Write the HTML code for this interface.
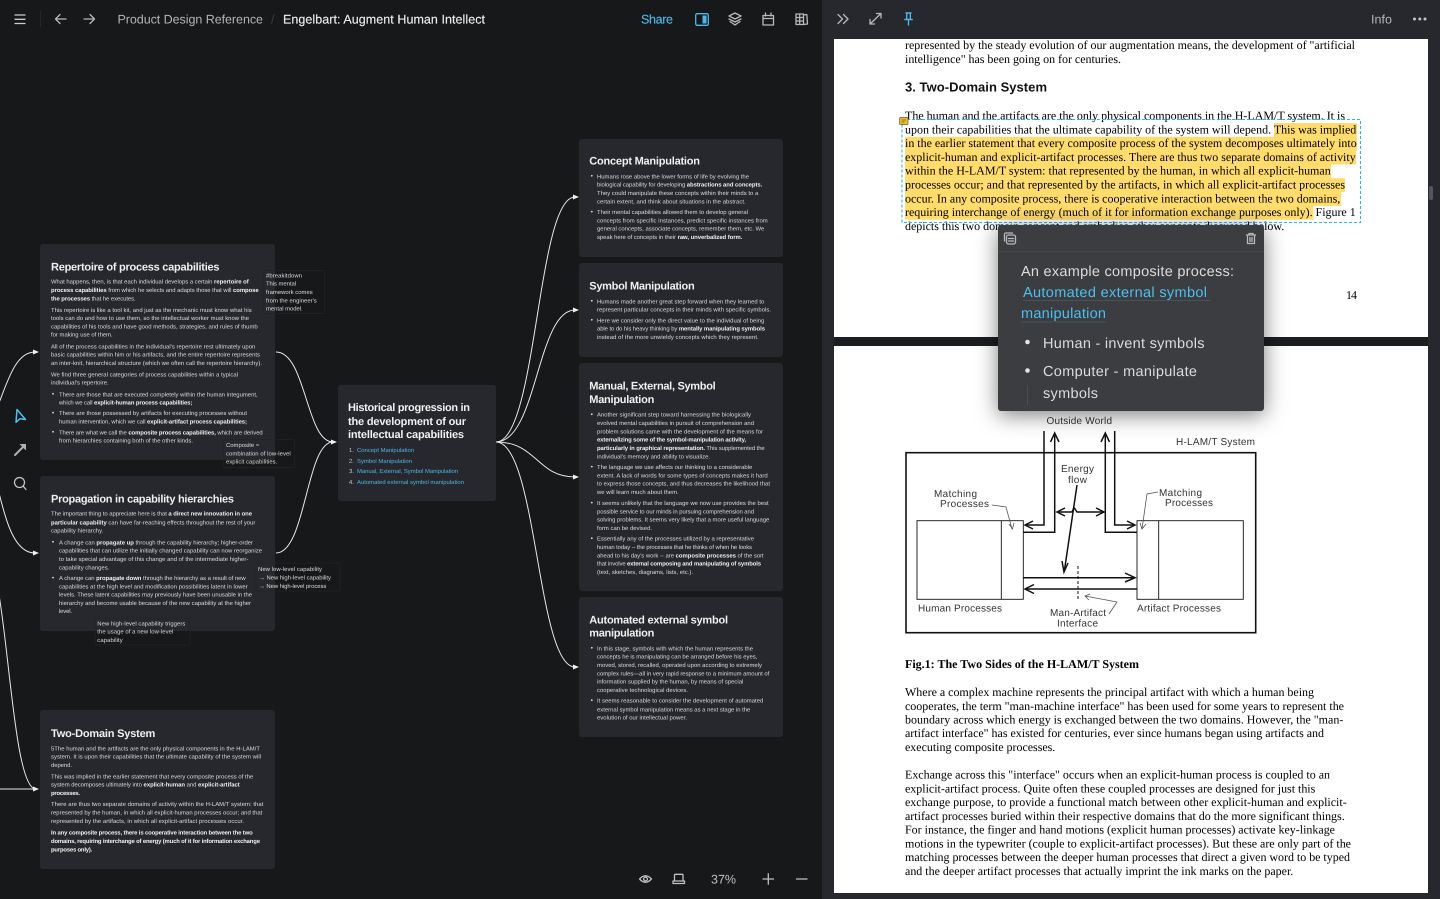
<!DOCTYPE html>
<html lang="en">
<head>
<meta charset="utf-8">
<title>Engelbart: Augment Human Intellect</title>
<style>
html,body{margin:0;padding:0;width:1440px;height:899px;overflow:hidden;background:#17181a}
svg{display:block;position:absolute;left:0;top:0;text-rendering:geometricPrecision;font-family:"Liberation Sans",sans-serif}
.s text,text.s{font-size:5.9px;fill:#dcdcde}
.s b,.s tspan{font-weight:700;fill:#f2f2f2}
.h{font-size:11px;font-weight:700;fill:#f0f0f1}
.n text{font-size:5.9px;fill:#dcdcde}
.p text{font-family:"Liberation Serif",serif;font-size:12px;fill:#000}
.f text{font-size:10px;fill:#333}
.i{fill:none;stroke:#b9b9bc;stroke-width:1.3;stroke-linecap:round;stroke-linejoin:round}
.c{fill:none;stroke:#e8e8e8;stroke-width:1}
.w{fill:#f0f0f0}
.pop text{font-size:14.5px;fill:#dcdcde}
</style>
</head>
<body>
<svg width="1440" height="899" viewBox="0 0 1440 899" xmlns="http://www.w3.org/2000/svg">
<defs>
<filter id="sh" x="-30%" y="-30%" width="160%" height="170%"><feDropShadow dx="0" dy="4" stdDeviation="11" flood-color="#000" flood-opacity=".5"/></filter>
</defs>
<rect width="1440" height="899" fill="#17181a"/>

<!-- connectors -->
<g class="c">
<path d="M-1,403C8,380 16,352 35,352"/>
<path d="M-1,493C6,520 14,553 35,553"/>
<path d="M-1,595C10,660 16,785 35,789"/>
<path d="M0,789H35"/>
<path d="M276,352C306,352 306,442 333,442"/>
<path d="M276,553C306,553 306,442 333,442"/>
<path d="M496,442C537,442 537,197 575,197"/>
<path d="M496,442C537,442 537,310 575,310"/>
<path d="M496,442C537,442 537,477 575,477"/>
<path d="M496,442C537,442 537,667 575,667"/>
</g>
<g class="w">
<path d="M33,349.5L39,352L33,354.5Z"/><path d="M33,550.5L39,553L33,555.5Z"/><path d="M33,786.5L39,789L33,791.5Z"/>
<path d="M331,439.5L337,442L331,444.5Z"/>
<path d="M573,194.5L579,197L573,199.5Z"/><path d="M573,307.5L579,310L573,312.5Z"/><path d="M573,474.5L579,477L573,479.5Z"/><path d="M573,664.5L579,667L573,669.5Z"/>
</g>

<!-- cards -->
<g fill="#27282d">
<rect x="40" y="244" width="235" height="216" rx="3"/>
<rect x="40" y="476" width="235" height="155" rx="3"/>
<rect x="40" y="710" width="235" height="159" rx="3"/>
<rect x="338" y="385" width="158" height="116" rx="3"/>
<rect x="579" y="139" width="204" height="118" rx="3"/>
<rect x="579" y="263" width="204" height="94" rx="3"/>
<rect x="579" y="363" width="204" height="228" rx="3"/>
<rect x="579" y="597" width="204" height="140" rx="3"/>
</g>

<!-- annotation boxes -->
<g fill="none" stroke="#222327" stroke-width=".7">
<rect x="263.5" y="270.5" width="61" height="43" rx="1.5"/>
<rect x="223.5" y="439.5" width="71" height="28" rx="1.5"/>
<rect x="256" y="563" width="84" height="28" rx="1.5"/>
<rect x="95" y="618" width="95" height="27" rx="1.5"/>
</g>

<!-- titles -->
<g class="h">
<text x="51" y="270.5" textLength="168.5">Repertoire of process capabilities</text>
<text x="51" y="502.3" textLength="183">Propagation in capability hierarchies</text>
<text x="51" y="737" textLength="104.3">Two-Domain System</text>
<text x="348" y="411" textLength="122">Historical progression in</text>
<text x="348" y="425" textLength="118">the development of our</text>
<text x="348" y="438" textLength="116">intellectual capabilities</text>
<text x="589.3" y="164.7" textLength="110.7">Concept Manipulation</text>
<text x="589.3" y="289.7" textLength="105.4">Symbol Manipulation</text>
<text x="589.3" y="389.7" textLength="126.4">Manual, External, Symbol</text>
<text x="589.3" y="403" textLength="65">Manipulation</text>
<text x="589.3" y="623.3" textLength="138.7">Automated external symbol</text>
<text x="589.3" y="636.7" textLength="65">manipulation</text>
</g>

<!-- card 1 -->
<g class="s">
<text x="51" y="283.7" textLength="197.7">What happens, then, is that each individual develops a certain <tspan>repertoire of</tspan></text>
<text x="51" y="292" textLength="207.7"><tspan>process capabilities</tspan> from which he selects and adapts those that will <tspan>compose</tspan></text>
<text x="51" y="300.3" textLength="84.7"><tspan>the processes</tspan> that he executes.</text>
<text x="51" y="312" textLength="200.7">This repertoire is like a tool kit, and just as the mechanic must know what his</text>
<text x="51" y="320" textLength="198">tools can do and how to use them, so the intellectual worker must know the</text>
<text x="51" y="328.3" textLength="206.7">capabilities of his tools and have good methods, strategies, and rules of thumb</text>
<text x="51" y="336.7" textLength="61.7">for making use of them.</text>
<text x="51" y="348.3" textLength="204.3">All of the process capabilities in the individual's repertoire rest ultimately upon</text>
<text x="51" y="356.7" textLength="209">basic capabilities within him or his artifacts, and the entire repertoire represents</text>
<text x="51" y="365" textLength="211">an inter-knit, hierarchical structure (which we often call the repertoire hierarchy).</text>
<text x="51" y="376.3" textLength="187">We find three general categories of process capabilities within a typical</text>
<text x="51" y="384.7" textLength="57.7">individual's repertoire.</text>
<text x="59" y="396.3" textLength="198.7">There are those that are executed completely within the human integument,</text>
<text x="59" y="404.7" textLength="133.3">which we call <tspan>explicit-human process capabilities;</tspan></text>
<text x="59" y="415" textLength="188">There are those possessed by artifacts for executing processes without</text>
<text x="59" y="423.3" textLength="188">human intervention, which we call <tspan>explicit-artifact process capabilities;</tspan></text>
<text x="59" y="434.3" textLength="203.7">There are what we call the <tspan>composite process capabilities,</tspan> which are derived</text>
<text x="59" y="442.7" textLength="134">from hierarchies containing both of the other kinds.</text>
</g>
<g fill="#ddd"><circle cx="53" cy="393.8" r=".9"/><circle cx="53" cy="412.6" r=".9"/><circle cx="53" cy="431.8" r=".9"/></g>

<!-- card 2 -->
<g class="s">
<text x="51" y="515.7" textLength="201">The important thing to appreciate here is that <tspan>a direct new innovation in one</tspan></text>
<text x="51" y="524.3" textLength="204.3"><tspan>particular capability</tspan> can have far-reaching effects throughout the rest of your</text>
<text x="51" y="532.7" textLength="52.3">capability hierarchy.</text>
<text x="59" y="544.3" textLength="194">A change can <tspan>propagate up</tspan> through the capability hierarchy; higher-order</text>
<text x="59" y="552.7" textLength="203">capabilities that can utilize the initially changed capability can now reorganize</text>
<text x="59" y="561" textLength="189.3">to take special advantage of this change and of the intermediate higher-</text>
<text x="59" y="569.3" textLength="50.3">capability changes.</text>
<text x="59" y="580" textLength="186.7">A change can <tspan>propagate down</tspan> through the hierarchy as a result of new</text>
<text x="59" y="588.3" textLength="188.7">capabilities at the high level and modification possibilities latent in lower</text>
<text x="59" y="596.7" textLength="193">levels. These latent capabilities may previously have been unusable in the</text>
<text x="59" y="605" textLength="192">hierarchy and become usable because of the new capability at the higher</text>
<text x="59" y="613" textLength="13">level.</text>
</g>
<g fill="#ddd"><circle cx="53" cy="541.8" r=".9"/><circle cx="53" cy="577.6" r=".9"/></g>

<!-- card 3 -->
<g class="s">
<text x="51" y="750.3" textLength="209">5The human and the artifacts are the only physical components in the H-LAM/T</text>
<text x="51" y="758.7" textLength="210">system. It is upon their capabilities that the ultimate capability of the system will</text>
<text x="51" y="767" textLength="21">depend.</text>
<text x="51" y="778.3" textLength="202.3">This was implied in the earlier statement that every composite process of the</text>
<text x="51" y="786.7" textLength="188.7">system decomposes ultimately into <tspan>explicit-human</tspan> and <tspan>explicit-artifact</tspan></text>
<text x="51" y="795" textLength="29"><tspan>processes.</tspan></text>
<text x="51" y="806" textLength="212.3">There are thus two separate domains of activity within the H-LAM/T system: that</text>
<text x="51" y="814.7" textLength="211.3">represented by the human, in which all explicit-human processes occur; and that</text>
<text x="51" y="823" textLength="193">represented by the artifacts, in which all explicit-artifact processes occur.</text>
<text x="51" y="834.3" textLength="201.7"><tspan>In any composite process, there is cooperative interaction between the two</tspan></text>
<text x="51" y="843" textLength="209"><tspan>domains, requiring interchange of energy (much of it for information exchange</tspan></text>
<text x="51" y="851.3" textLength="41.3"><tspan>purposes only).</tspan></text>
</g>

<!-- central list -->
<g font-size="5.9">
<g fill="#c8c8ca"><text x="349" y="452">1.</text><text x="349" y="463">2.</text><text x="349" y="473">3.</text><text x="349" y="484">4.</text></g>
<g fill="#4db6e6">
<text x="357" y="452" textLength="57">Concept Manipulation</text>
<text x="357" y="463" textLength="55">Symbol Manipulation</text>
<text x="357" y="473" textLength="101">Manual, External, Symbol Manipulation</text>
<text x="357" y="484" textLength="107">Automated external symbol manipulation</text>
</g>
</g>

<!-- right cards -->
<g class="s">
<text x="597" y="178.3" textLength="152">Humans rose above the lower forms of life by evolving the</text>
<text x="597" y="186.7" textLength="165.3">biological capability for developing <tspan>abstractions and concepts.</tspan></text>
<text x="597" y="195" textLength="161.3">They could manipulate these concepts within their minds to a</text>
<text x="597" y="203.3" textLength="148.7">certain extent, and think about situations in the abstract.</text>
<text x="597" y="214" textLength="151">Their mental capabilities allowed them to develop general</text>
<text x="597" y="222.3" textLength="170.7">concepts from specific instances, predict specific instances from</text>
<text x="597" y="230.7" textLength="167.3">general concepts, associate concepts, remember them, etc. We</text>
<text x="597" y="239" textLength="145.3">speak here of concepts in their <tspan>raw, unverbalized form.</tspan></text>

<text x="597" y="303.3" textLength="167.3">Humans made another great step forward when they learned to</text>
<text x="597" y="311.7" textLength="174">represent particular concepts in their minds with specific symbols.</text>
<text x="597" y="322.3" textLength="167.3">Here we consider only the direct value to the individual of being</text>
<text x="597" y="330.7" textLength="168">able to do his heavy thinking by <tspan>mentally manipulating symbols</tspan></text>
<text x="597" y="339" textLength="161.7">instead of the more unwieldy concepts which they represent.</text>

<text x="597" y="416.7" textLength="154">Another significant step toward harnessing the biologically</text>
<text x="597" y="425" textLength="157">evolved mental capabilities in pursuit of comprehension and</text>
<text x="597" y="433.3" textLength="166">problem solutions came with the development of the means for</text>
<text x="597" y="441.7" textLength="149"><tspan>externalizing some of the symbol-manipulation activity,</tspan></text>
<text x="597" y="450" textLength="167.7"><tspan>particularly in graphical representation.</tspan> This supplemented the</text>
<text x="597" y="458.3" textLength="113">individual's memory and ability to visualize.</text>
<text x="597" y="469" textLength="155.3">The language we use affects our thinking to a considerable</text>
<text x="597" y="477.3" textLength="170.7">extent. A lack of words for some types of concepts makes it hard</text>
<text x="597" y="485.7" textLength="173">to express those concepts, and thus decreases the likelihood that</text>
<text x="597" y="494" textLength="81.7">we will learn much about them.</text>
<text x="597" y="505" textLength="171.7">It seems unlikely that the language we now use provides the best</text>
<text x="597" y="513.3" textLength="157">possible service to our minds in pursuing comprehension and</text>
<text x="597" y="521.7" textLength="172.3">solving problems. It seems very likely that a more useful language</text>
<text x="597" y="530" textLength="55">form can be devised.</text>
<text x="597" y="540.7" textLength="157">Essentially any of the processes utilized by a representative</text>
<text x="597" y="549" textLength="155">human today -- the processes that he thinks of when he looks</text>
<text x="597" y="557.3" textLength="166.7">ahead to his day's work -- are <tspan>composite processes</tspan> of the sort</text>
<text x="597" y="565.7" textLength="164">that involve <tspan>external composing and manipulating of symbols</tspan></text>
<text x="597" y="574" textLength="96">(text, sketches, diagrams, lists, etc.).</text>

<text x="597" y="650.3" textLength="156">In this stage, symbols with which the human represents the</text>
<text x="597" y="658.7" textLength="160.3">concepts he is manipulating can be arranged before his eyes,</text>
<text x="597" y="667" textLength="165">moved, stored, recalled, operated upon according to extremely</text>
<text x="597" y="675.3" textLength="172.3">complex rules—all in very rapid response to a minimum amount of</text>
<text x="597" y="683.7" textLength="146.3">information supplied by the human, by means of special</text>
<text x="597" y="692" textLength="91">cooperative technological devices.</text>
<text x="597" y="702.7" textLength="166.3">It seems reasonable to consider the development of automated</text>
<text x="597" y="711.3" textLength="153.3">external symbol manipulation means as a next stage in the</text>
<text x="597" y="719.7" textLength="90">evolution of our intellectual power.</text>
</g>
<g fill="#ddd">
<circle cx="591.8" cy="175.8" r=".9"/><circle cx="591.8" cy="211.6" r=".9"/>
<circle cx="591.8" cy="300.8" r=".9"/><circle cx="591.8" cy="319.8" r=".9"/>
<circle cx="591.8" cy="414.2" r=".9"/><circle cx="591.8" cy="466.6" r=".9"/><circle cx="591.8" cy="502.6" r=".9"/><circle cx="591.8" cy="538.2" r=".9"/>
<circle cx="591.8" cy="647.8" r=".9"/><circle cx="591.8" cy="700.2" r=".9"/>
</g>

<!-- annotations -->
<g class="n">
<text x="266" y="277.3" textLength="36">#breakitdown</text>
<text x="266" y="285.7" textLength="30">This mental</text>
<text x="266" y="294" textLength="46.7">framework comes</text>
<text x="266" y="302.3" textLength="50.7">from the engineer's</text>
<text x="266" y="310.7" textLength="36.7">mental model.</text>
<text x="226" y="447" textLength="33.3">Composite =</text>
<text x="226" y="455.3" textLength="64.7">combination of low-level</text>
<text x="226" y="463.7" textLength="51.3">explicit capabilities.</text>
<text x="258" y="571" textLength="64">New low-level capability</text>
<text x="259" y="579.7" textLength="72">→ New high-level capability</text>
<text x="259" y="588" textLength="67.3">→ New high-level process</text>
<text x="97.3" y="625.3" textLength="88">New high-level capability triggers</text>
<text x="97.3" y="633.7" textLength="76">the usage of a new low-level</text>
<text x="97.3" y="642" textLength="25.4">capability</text>
</g>

<!-- top bar left -->
<path d="M14.5,15H25.5M14.5,19.3H25.5M14.5,23.5H25.5" fill="none" stroke="#ccc" stroke-width="1.3"/>
<path d="M40.5,11V27" stroke="#26272a"/>
<path class="i" d="M66,19H55.5M60,14.5L55.5,19L60,23.5"/>
<path class="i" d="M84,19H94.5M90,14.5L94.5,19L90,23.5"/>
<text x="117.5" y="23.3" font-size="12.5" fill="#b4b4b7" textLength="145.5">Product Design Reference</text>
<text x="271" y="23.3" font-size="12.5" fill="#3c3d40">/</text>
<text x="283" y="23.3" font-size="12.5" fill="#ececee" font-weight="400" stroke="#ececee" stroke-width=".15" textLength="202">Engelbart: Augment Human Intellect</text>
<text x="641" y="23.3" font-size="12.5" fill="#4cb8ea" stroke="#4cb8ea" stroke-width=".15" textLength="32">Share</text>

<!-- top bar right icons -->
<rect x="695.7" y="13.7" width="12.6" height="11.6" rx="1.5" fill="none" stroke="#4cb8ea" stroke-width="1.3"/>
<rect x="702.5" y="15.5" width="4" height="8" fill="#4cb8ea"/>
<path class="i" d="M735,13L741,16L735,19L729,16ZM729,19L735,22L741,19M730,21.5L735,25L740,21.5"/>
<path class="i" d="M763,15.5H773.5V25H763ZM763,18.5H773.5M765.5,13V16M771,13V16"/>
<path class="i" d="M796,14H803.5V24.5H796ZM799.7,14V24.5M796,17.5H803.5M796,21H803.5M803.5,15L806.8,14.5L807.5,24L803.5,24.5" stroke-width="1.1"/>

<!-- right panel -->
<rect x="822" y="0" width="618" height="899" fill="#27282d"/>
<rect x="834" y="39" width="594" height="298" fill="#fff"/>
<rect x="834" y="337" width="594" height="9" fill="#1c1d20"/>
<rect x="834" y="346" width="594" height="547" fill="#fff"/>
<rect x="1429" y="186" width="4" height="14" rx="2" fill="#55565b"/>

<path class="i" d="M838,14.5L842.5,19L838,23.5M843.5,14.5L848,19L843.5,23.5"/>
<path class="i" d="M870,24L881,13.5M876.5,13.5H881V18M870,19.5V24H874.5"/>
<path d="M906,13H911M906.7,13V19.5M910.3,13V19.5M904.8,19.5H912.2M908.5,19.5V25" fill="none" stroke="#4cb8ea" stroke-width="1.4" stroke-linecap="round"/>
<text x="1371" y="23.3" font-size="12.5" fill="#b4b4b7" textLength="21">Info</text>
<g fill="#c4c4c6"><circle cx="1414.5" cy="19" r="1.5"/><circle cx="1419.8" cy="19" r="1.5"/><circle cx="1425" cy="19" r="1.5"/></g>

<!-- pdf highlights -->
<g fill="#ffdc6b">
<rect x="1274" y="123" width="83" height="13.9"/>
<rect x="905" y="136.8" width="452" height="13.9"/>
<rect x="905" y="150.6" width="451" height="13.9"/>
<rect x="905" y="164.4" width="426" height="13.9"/>
<rect x="905" y="178.2" width="440" height="13.9"/>
<rect x="905" y="192" width="436" height="13.9"/>
<rect x="905" y="205.8" width="408.5" height="13.9"/>
</g>

<!-- pdf text -->
<g class="p">
<text x="905" y="49" textLength="450">represented by the steady evolution of our augmentation means, the development of "artificial</text>
<text x="905" y="63" textLength="216">intelligence" has been going on for centuries.</text>
<text x="905" y="119.5" textLength="440">The human and the artifacts are the only physical components in the H-LAM/T system. It is</text>
<text x="905" y="133.3" textLength="451.3">upon their capabilities that the ultimate capability of the system will depend. This was implied</text>
<text x="905" y="147" textLength="451.7">in the earlier statement that every composite process of the system decomposes ultimately into</text>
<text x="905" y="161" textLength="450.7">explicit-human and explicit-artifact processes. There are thus two separate domains of activity</text>
<text x="905" y="174.7" textLength="425.7">within the H-LAM/T system: that represented by the human, in which all explicit-human</text>
<text x="905" y="188.5" textLength="440">processes occur; and that represented by the artifacts, in which all explicit-artifact processes</text>
<text x="905" y="202.3" textLength="435.3">occur. In any composite process, there is cooperative interaction between the two domains,</text>
<text x="905" y="216" textLength="450.7">requiring interchange of energy (much of it for information exchange purposes only). Figure 1</text>
<text x="905" y="229.8" textLength="379.3">depicts this two domain concept and embodies other concepts discussed below.</text>
<text x="1346" y="299" textLength="11">14</text>
</g>
<text x="905" y="91.5" font-size="13" font-weight="700" fill="#111" textLength="142">3. Two-Domain System</text>
<rect x="902" y="119.5" width="458.5" height="103" fill="none" stroke="#2ab4f0" stroke-width="1.1" stroke-dasharray="3 2"/>
<rect x="899.5" y="117.5" width="8.5" height="7" rx="1" fill="#f0bd30" stroke="#6b5a1c" stroke-width=".7"/>
<path d="M901.5,120H906M901.5,122H904.5" stroke="#6b5a1c" stroke-width=".7"/>

<!-- figure -->
<g fill="none" stroke="#111">
<rect x="906" y="452.7" width="349.7" height="180" stroke-width="1.6"/>
<rect x="917" y="520.7" width="106.3" height="78.6" stroke-width=".9"/>
<path d="M1001.3,520.7V599.3" stroke-width=".9"/>
<rect x="1137" y="520.7" width="106.3" height="78.6" stroke-width=".9"/>
<path d="M1158.7,520.7V599.3" stroke-width=".9"/>
<g stroke-width="1.5">
<path d="M1044,431V525H1026"/>
<path d="M1054.7,434V532.3H1023.3"/>
<path d="M1105.3,434V532.3H1137"/>
<path d="M1114.7,431V525H1134"/>
<path d="M1059,512H1072L1074,507.5L1077,512H1103"/>
<path d="M1077,485L1064.5,570"/>
<path d="M1023.3,577.7H1133"/>
<path d="M1026,589H1137"/>
<path d="M1050.5,442L1054.7,433L1059,442M1101,442L1105.3,433L1109.5,442"/>
<path d="M1033,521L1025,525L1033,529M1127,521L1135,525L1127,529"/>
<path d="M1065,508L1057,512L1065,516M1096,508L1104,512L1096,516"/>
<path d="M1062,561L1064,572L1068,563"/>
<path d="M1125,573L1135,577.7L1125,582M1034,584.5L1025,589L1034,593.5"/>
</g>
<path d="M1078,566V599" stroke-width="1" stroke-dasharray="3 2"/>
<g stroke="#555" stroke-width=".8">
<path d="M992,505L1006,507L1012,529M1009,524L1012.5,529L1014,523"/>
<path d="M1158,492L1147,494L1142,529M1140,523L1142,529L1146,524"/>
<path d="M1117,602L1109,614M1117,602L1085,596M1090,594L1085,596L1089,600"/>
</g>
</g>
<g class="f">
<text x="1046.5" y="424" textLength="65.5">Outside World</text>
<text x="1176" y="445" textLength="79">H-LAM/T System</text>
<text x="1061" y="472" textLength="33">Energy</text>
<text x="1068" y="483" textLength="19">flow</text>
<text x="934" y="497" textLength="43">Matching</text>
<text x="940" y="507" textLength="49">Processes</text>
<text x="1159" y="496" textLength="43">Matching</text>
<text x="1165" y="506" textLength="48">Processes</text>
<text x="918" y="611.5" textLength="84">Human Processes</text>
<text x="1137" y="611.5" textLength="84">Artifact Processes</text>
<text x="1050" y="616" textLength="56">Man-Artifact</text>
<text x="1057" y="626.5" textLength="41">Interface</text>
</g>

<g class="p">
<text x="905" y="668" font-weight="700" textLength="234">Fig.1: The Two Sides of the H-LAM/T System</text>
<text x="905" y="696" textLength="409">Where a complex machine represents the principal artifact with which a human being</text>
<text x="905" y="710" textLength="439">cooperates, the term "man-machine interface" has been used for some years to represent the</text>
<text x="905" y="723.5" textLength="438.3">boundary across which energy is exchanged between the two domains. However, the "man-</text>
<text x="905" y="737" textLength="419">artifact interface" has existed for centuries, ever since humans began using artifacts and</text>
<text x="905" y="751" textLength="150.3">executing composite processes.</text>
<text x="905" y="778.5" textLength="425">Exchange across this "interface" occurs when an explicit-human process is coupled to an</text>
<text x="905" y="792.3" textLength="410.3">explicit-artifact process. Quite often these coupled processes are designed for just this</text>
<text x="905" y="806" textLength="441.7">exchange purpose, to provide a functional match between other explicit-human and explicit-</text>
<text x="905" y="819.8" textLength="439.7">artifact processes buried within their respective domains that do the more significant things.</text>
<text x="905" y="833.5" textLength="430">For instance, the finger and hand motions (explicit human processes) activate key-linkage</text>
<text x="905" y="847.3" textLength="446">motions in the typewriter (couple to explicit-artifact processes). But these are only part of the</text>
<text x="905" y="861" textLength="445">matching processes between the deeper human processes that direct a given word to be typed</text>
<text x="905" y="875" textLength="388.3">and the deeper artifact processes that actually imprint the ink marks on the paper.</text>
</g>

<!-- popup -->
<rect x="998" y="225" width="266" height="186" rx="3" fill="#3b3c41" filter="url(#sh)"/>
<path d="M998,251.7H1264" stroke="#47484d"/>
<g class="i" stroke-width="1">
<rect x="1006.5" y="235" width="9" height="9" rx="2"/>
<path d="M1004.5,241V234.5Q1004.5,233 1006,233H1012.5M1008.5,238.5H1013.5M1008.5,241H1013.5"/>
<path d="M1246.5,235H1255.5M1249,235V233.5H1253V235M1247.5,235V243.5H1254.5V235M1250,237.5V241.5M1252,237.5V241.5"/>
</g>
<g class="pop">
<text x="1021" y="276" textLength="213">An example composite process:</text>
<text x="1023" y="297" style="fill:#4cc0f0" textLength="184">Automated external symbol</text>
<text x="1021" y="318" style="fill:#4cc0f0" textLength="85">manipulation</text>
<text x="1043" y="348" textLength="161.5">Human - invent symbols</text>
<text x="1043" y="376" textLength="154">Computer - manipulate</text>
<text x="1043" y="398" textLength="55">symbols</text>
</g>
<path d="M1023,300.5H1210M1021,322H1106" stroke="#4b5a66" stroke-width=".8"/>
<circle cx="1027.5" cy="342" r="2.3" fill="#e4e4e6"/><circle cx="1027.5" cy="370.5" r="2.3" fill="#e4e4e6"/>
<path d="M1027.5,385V405" stroke="#4d4e53"/>

<!-- side rail -->
<path d="M17,409.5L25.5,419.5L20,418.7L16,422.3Z" fill="none" stroke="#4cc0f0" stroke-width="1.5" stroke-linejoin="round"/>
<path d="M15,455L24,446" stroke="#b0b0b2" stroke-width="2" stroke-linecap="round"/><path d="M19.5,444H26V450.5Z" fill="#b0b0b2"/>
<circle cx="19.5" cy="482.5" r="5" fill="none" stroke="#c4c4c6" stroke-width="1.3"/><path d="M23.3,486.3L26,489.5" stroke="#c4c4c6" stroke-width="1.3" stroke-linecap="round"/>

<!-- bottom bar -->
<g class="i" style="stroke:#c0c0c2">
<path d="M639.5,879Q645.5,872.5 651.5,879Q645.5,885.5 639.5,879Z"/>
<circle cx="645.5" cy="879" r="1.9"/>
<path d="M674.5,875V881H683V875Q683,874.3 682.3,874.3H675.2Q674.5,874.3 674.5,875ZM673,881H684.5V883.5H673Z"/>
<path d="M763,879H773.5M768.3,873.8V884.2"/>
<path d="M796.5,879H807"/>
</g>
<text x="711" y="883.5" font-size="12.5" fill="#c0c0c2" textLength="25">37%</text>
</svg>
</body>
</html>
